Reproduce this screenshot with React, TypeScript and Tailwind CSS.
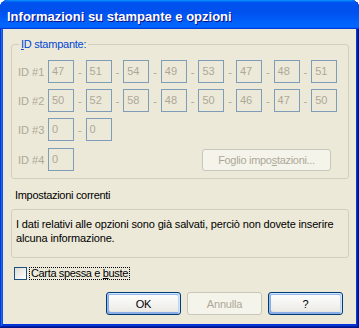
import { Fragment, type ReactNode } from "react";

function Edit({ v }: { v: string }) {
  return (
    <div className="h-[23px] w-[26px] shrink-0 border border-[#7F9DB9] pl-[3px] pt-[3px] text-[11px] leading-[14px] text-[#ACA899]">
      {v}
    </div>
  );
}

function Sep() {
  return (
    <div className="w-[11.6px] shrink-0 text-center text-[11px] leading-[14px] text-[#ACA899]">-</div>
  );
}

function Row({ label, values, children }: { label: string; values: string[]; children?: ReactNode }) {
  return (
    <div className="flex h-[23px] items-center pl-[6px]">
      <div className="w-[30px] shrink-0 text-[11px] leading-[14px] text-[#ACA899]">{label}</div>
      {values.map((v, i) => (
        <Fragment key={i}>
          {i > 0 && <Sep />}
          <Edit v={v} />
        </Fragment>
      ))}
      {children}
    </div>
  );
}

const btn =
  "h-[23px] w-[75px] rounded-[3px] text-[11px] leading-[14px] tracking-[-0.2px]";
const btnActive =
  "border border-[#003C74] bg-[linear-gradient(180deg,#fff,#ecebe6_86%,#d6d0c5)] text-black shadow-[inset_-1px_1px_#cee7ff,inset_1px_2px_#98b8ea,inset_-2px_2px_#bcd4f6,inset_1px_-1px_#89ade4,inset_2px_-2px_#89ade4]";
const btnDisabled = "border border-[#C9C7BA] bg-[#F5F4EA] text-[#ACA899]";

export default function App() {
  return (
    <div className="h-[328px] w-[359px] bg-white font-['Liberation_Sans',Arial,sans-serif]">
      <div className="flex h-full flex-col rounded-t-[8px] bg-[#0831D9] shadow-[inset_-1px_-1px_#00138c,inset_1px_1px_#0831d9,inset_-2px_-2px_#001ea0,inset_2px_2px_#166aee,inset_-3px_-3px_#003bda,inset_3px_3px_#0855dd]">
        <div className="h-[29px] shrink-0 rounded-t-[8px] bg-[linear-gradient(180deg,#0997ff,#0053ee_8%,#0050ee_40%,#06f_88%,#06f_93%,#005bff_95%,#003dd7_96%,#003dd7)] pl-[7px] pt-[9px] text-[13px] font-bold leading-[16px] text-white [text-shadow:1px_1px_#0F1089]">
          Informazioni su stampante e opzioni
        </div>
        <div className="mx-[3px] mb-[4px] flex flex-1 flex-col bg-[#ECE9D8] text-[11px] leading-[14px] text-black">
          <fieldset className="ml-[8px] mr-[7px] mt-[8px] rounded-[3px] border border-[#D0D0BF] px-0 pb-[7px] pt-0">
            <legend className="ml-[7px] px-[2px] text-[11px] leading-[14px] tracking-[-0.25px] text-[#0046D5]">
              <u>I</u>D stampante:
            </legend>
            <div className="mt-[9px] flex flex-col">
              <Row label="ID #1" values={["47", "51", "54", "49", "53", "47", "48", "51"]} />
              <div className="mt-[6px]">
                <Row label="ID #2" values={["50", "52", "58", "48", "50", "46", "47", "50"]} />
              </div>
              <div className="mt-[6px]">
                <Row label="ID #3" values={["0", "0"]} />
              </div>
              <div className="mt-[7px]">
                <Row label="ID #4" values={["0"]}>
                  <button
                    disabled
                    className="ml-auto mr-[17px] h-[22px] w-[129px] self-end rounded-[3px] border border-[#C9C7BA] bg-[#F5F4EA] text-[11px] leading-[14px] tracking-[-0.3px] text-[#ACA899]"
                  >
                    Foglio impo<u>s</u>tazioni...
                  </button>
                </Row>
              </div>
            </div>
          </fieldset>
          <div className="ml-[12px] mt-[9px] tracking-[-0.3px]">Impostazioni correnti</div>
          <div className="ml-[8px] mr-[7px] mt-[7px] h-[49px] rounded-[3px] border border-[#D0D0BF] pl-[4px] pt-[7px] tracking-[-0.15px] whitespace-nowrap">
            I dati relativi alle opzioni sono già salvati, perciò non dovete inserire
            <br />
            alcuna informazione.
          </div>
          <div className="ml-[11px] mt-[9px] flex h-[13px] items-center">
            <div className="h-[13px] w-[13px] shrink-0 border border-[#1C5180] bg-[linear-gradient(135deg,#DCDCD7,#FFFFFF)]" />
            <div className="ml-[2px] h-[13px] border border-dotted border-black px-[1px] text-[11px] leading-[11px] tracking-[-0.35px]">
              Carta spessa e <u>b</u>uste
            </div>
          </div>
          <div className="mr-[13px] mt-[12px] flex justify-end gap-[6px]">
            <button className={`${btn} ${btnActive}`}>OK</button>
            <button disabled className={`${btn} ${btnDisabled}`}>
              Annulla
            </button>
            <button className={`${btn} ${btnActive}`}>?</button>
          </div>
        </div>
      </div>
    </div>
  );
}
